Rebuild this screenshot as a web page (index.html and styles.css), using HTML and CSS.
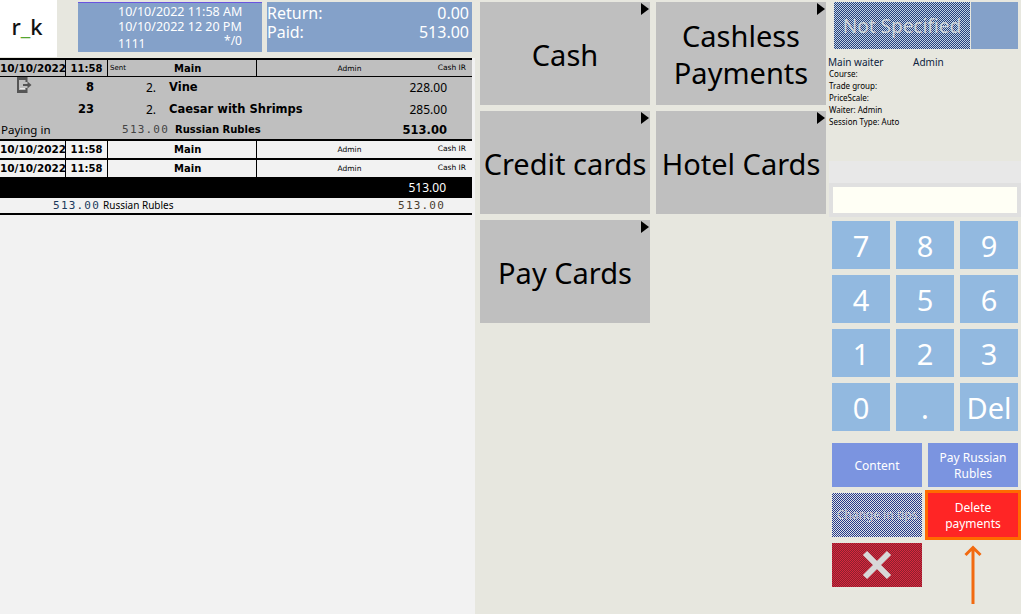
FILE: index.html
```html
<!DOCTYPE html>
<html lang="en">
<head>
    <meta charset="UTF-8">
    <title>Payment</title>
    <link rel="stylesheet" href="styles.css">
</head>
<body>
<div class="app">

    <div class="left">
        <div class="top">
            <div class="logo">r<span class="logo-line">_</span>k</div>
            <div class="order-info">
                <p>10/10/2022 11:58 AM</p>
                <p>10/10/2022 12 20 PM</p>
                <p class="order-last"><span>1111</span><span>*/0</span></p>
            </div>
            <div class="totals">
                <p><span>Return:</span><span>0.00</span></p>
                <p><span>Paid:</span><span>513.00</span></p>
            </div>
        </div>

        <div class="check">
            <div class="head-row active">
                <div class="c-date">10/10/2022</div>
                <div class="c-time">11:58</div>
                <div class="c-main"><span class="sent">Sent</span><b>Main</b></div>
                <div class="c-admin">Admin</div>
                <div class="c-pay">Cash IR</div>
            </div>
            <div class="items">
                <div class="item">
                    <div class="item-icon">
                        <svg width="15" height="16" viewBox="0 0 15 16">
                            <path d="M1 3v10" stroke="#555" stroke-width="2"/>
                            <path d="M0 0h10.500v5h-2V3H0zM0 13h8.500v-2h2v5H0z" fill="#555"/>
                            <path d="M3 11.500h5" stroke="#e8e8e8" stroke-width="1"/>
                            <path d="M6 8h5" stroke="#555" stroke-width="2"/>
                            <path d="M10.500 4.500L14.500 8l-4 3.500z" fill="#555"/>
                        </svg>
                    </div>
                    <div class="item-num">8</div>
                    <div class="item-qty">2.</div>
                    <div class="item-name">Vine</div>
                    <div class="item-sum">228.00</div>
                </div>
                <div class="item item-low">
                    <div class="item-icon"></div>
                    <div class="item-num">23</div>
                    <div class="item-qty">2.</div>
                    <div class="item-name">Caesar with Shrimps</div>
                    <div class="item-sum">285.00</div>
                </div>
                <div class="paying">
                    <div class="paying-label">Paying in</div>
                    <div class="paying-val">513.00</div>
                    <div class="paying-cur">Russian Rubles</div>
                    <div class="paying-sum">513.00</div>
                </div>
            </div>
            <div class="head-row">
                <div class="c-date">10/10/2022</div>
                <div class="c-time">11:58</div>
                <div class="c-main"><b>Main</b></div>
                <div class="c-admin">Admin</div>
                <div class="c-pay">Cash IR</div>
            </div>
            <div class="head-row">
                <div class="c-date">10/10/2022</div>
                <div class="c-time">11:58</div>
                <div class="c-main"><b>Main</b></div>
                <div class="c-admin">Admin</div>
                <div class="c-pay">Cash IR</div>
            </div>
            <div class="total-row">513.00</div>
            <div class="cur-row">
                <div class="cur-val">513.00</div>
                <div class="cur-name">Russian Rubles</div>
                <div class="cur-sum">513.00</div>
            </div>
        </div>
    </div>

    <div class="center">
        <div class="tile">Cash</div>
        <div class="tile">Cashless Payments</div>
        <div class="tile">Credit cards</div>
        <div class="tile">Hotel Cards</div>
        <div class="tile">Pay Cards</div>
    </div>

    <div class="right">
        <div class="table-btns">
            <div class="not-spec">Not Specified</div>
            <div class="table-blank"></div>
        </div>
        <div class="waiter-info">
            <div class="main-waiter"><span>Main waiter</span><span>Admin</span></div>
            <p>Course:</p>
            <p>Trade group:</p>
            <p>PriceScale:</p>
            <p>Waiter: Admin</p>
            <p>Session Type: Auto</p>
        </div>
        <div class="input-band">
            <div class="input-frame">
                <div class="input-box"></div>
            </div>
        </div>
        <div class="keypad">
            <div class="key">7</div>
            <div class="key">8</div>
            <div class="key">9</div>
            <div class="key">4</div>
            <div class="key">5</div>
            <div class="key">6</div>
            <div class="key">1</div>
            <div class="key">2</div>
            <div class="key">3</div>
            <div class="key">0</div>
            <div class="key">.</div>
            <div class="key">Del</div>
        </div>
        <div class="actions">
            <div class="act">Content</div>
            <div class="act">Pay Russian Rubles</div>
            <div class="act act-off">Change in tips</div>
            <div class="act act-del">Delete payments</div>
            <div class="act act-x">
                <svg width="30" height="30" viewBox="0 0 30 30">
                    <path d="M3 3l24 24M27 3L3 27" stroke="#d8d8d8" stroke-width="6"/>
                </svg>
            </div>
            <div class="arrow">
                <svg width="18" height="60" viewBox="0 0 18 60">
                    <path d="M9 59V2M1.500 10l7.500-7.500 7.500 7.500" fill="none" stroke="#f26a10" stroke-width="3"/>
                </svg>
            </div>
        </div>
    </div>

</div>
</body>
</html>
```

FILE: styles.css
```css
html, body{
    margin: 0;
    height: 100%;
}
body{
    font-family: "Noto Sans", "Liberation Sans", sans-serif;
    background-color: #e7e7df;
    overflow: hidden;
}
p{
    margin: 0;
}
.app{
    display: flex;
    width: 1021px;
    height: 614px;
}

/* left part */
.left{
    width: 475px;
    flex-shrink: 0;
    display: flex;
    flex-direction: column;
    background-color: #f2f2f2;
}
.top{
    display: flex;
    height: 58px;
    background-color: #e7e7df;
    flex-shrink: 0;
    padding-right: 3px;
}
.logo{
    width: 57px;
    height: 57px;
    flex-shrink: 0;
    background-color: white;
    display: flex;
    align-items: center;
    justify-content: center;
    font-size: 22px;
    font-weight: 500;
    color: #111;
    padding: 0 3px 6px 0;
    box-sizing: border-box;
}
.logo-line{
    color: #55a630;
}
.order-info{
    margin: 2px 0 6px 21px;
    width: 184px;
    flex-shrink: 0;
    box-sizing: border-box;
    padding: 1px 18px 0 40px;
    background-color: #84a1c9;
    border-top: 1px solid #6a55e0;
    color: white;
    font-size: 12.500px;
    line-height: 15px;
}
.order-last{
    display: flex;
    justify-content: space-between;
    padding: 2px 2px 0 0;
    font-size: 12px;
}
.order-last span:last-child{
    margin-top: -3px;
}
.totals{
    margin: 2px 0 6px 5px;
    flex: 1;
    box-sizing: border-box;
    padding: 2px 3px 0 0;
    background-color: #84a1c9;
    color: white;
    font-size: 16px;
    line-height: 19px;
}
.totals p{
    display: flex;
    justify-content: space-between;
}

/* check */
.check{
    width: 472px;
    font-family: "DejaVu Sans", sans-serif;
    color: black;
}
.head-row{
    display: flex;
    height: 17px;
    border-top: 2px solid black;
    background-color: #f2f2f2;
    font-size: 10px;
    line-height: 17px;
}
.head-row.active{
    height: 16px;
    background-color: #bfbfbf;
    border-bottom: 1px solid black;
}
.head-row > div{
    overflow: hidden;
    white-space: nowrap;
}
.c-date{
    width: 66px;
    box-sizing: border-box;
    border-right: 1px solid black;
    font-weight: bold;
    font-size: 10.500px;
}
.c-time{
    width: 42px;
    box-sizing: border-box;
    border-right: 1px solid black;
    text-align: center;
    font-weight: bold;
}
.c-main{
    width: 149px;
    box-sizing: border-box;
    border-right: 1px solid black;
    position: relative;
    padding-left: 66px;
}
.sent{
    position: absolute;
    left: 2px;
    font-size: 7px;
}
.c-admin{
    width: 165px;
    padding-left: 10px;
    text-align: center;
    font-size: 7.500px;
}
.c-pay{
    flex: 1;
    text-align: right;
    padding-right: 6px;
    font-size: 7.500px;
    line-height: 15px;
}
.items{
    background-color: #bfbfbf;
}
.item{
    display: flex;
    height: 21px;
    line-height: 21px;
    font-size: 11.500px;
}
.item-low{
    line-height: 23px;
}
.item-icon{
    width: 60px;
    flex-shrink: 0;
    box-sizing: border-box;
    padding-left: 17px;
}
.item-icon svg{
    display: block;
}
.item-num{
    flex: 0 0 34px;
    text-align: right;
    font-weight: bold;
}
.item-qty{
    width: 62px;
    text-align: right;
    font-family: "Noto Sans", sans-serif;
    font-size: 12px;
}
.item-name{
    flex: 1;
    padding-left: 13px;
    font-weight: bold;
}
.item-sum{
    width: 60px;
    text-align: right;
    padding-right: 25px;
    font-family: "Noto Sans", sans-serif;
    font-size: 12px;
}
.paying{
    display: flex;
    height: 20px;
    line-height: 22px;
    font-size: 11.500px;
}
.paying-label{
    width: 100px;
    padding-left: 1px;
    font-family: "Noto Sans", sans-serif;
    font-size: 11.500px;
}
.paying-val{
    width: 68px;
    text-align: right;
    font-family: "DejaVu Sans Mono", monospace;
    font-size: 11px;
    letter-spacing: 1.200px;
    color: #444;
}
.paying-cur{
    flex: 1;
    padding-left: 6px;
    font-weight: bold;
    font-size: 10px;
}
.paying-sum{
    width: 60px;
    text-align: right;
    padding-right: 25px;
    font-weight: bold;
}
.total-row{
    height: 21px;
    line-height: 21px;
    padding-right: 26px;
    text-align: right;
    background-color: black;
    color: white;
    font-family: "Noto Sans", sans-serif;
    font-size: 12px;
}
.cur-row{
    display: flex;
    height: 15px;
    line-height: 15px;
    border-bottom: 2px solid black;
    font-size: 10px;
}
.cur-val{
    width: 100px;
    text-align: right;
    font-family: "DejaVu Sans Mono", monospace;
    font-size: 11px;
    letter-spacing: 1.200px;
    color: #1c3a5c;
}
.cur-name{
    flex: 1;
    padding-left: 3px;
    font-family: "Noto Sans", sans-serif;
}
.cur-sum{
    width: 60px;
    text-align: right;
    padding-right: 27px;
    font-family: "DejaVu Sans Mono", monospace;
    font-size: 11px;
    letter-spacing: 1.200px;
    color: #4a4030;
}

/* payment types */
.center{
    width: 346px;
    flex-shrink: 0;
    margin-left: 5px;
    padding-top: 2px;
    display: grid;
    grid-template-columns: 170px 170px;
    grid-auto-rows: 103px;
    align-content: start;
    gap: 6px;
}
.tile{
    position: relative;
    background-color: #bfbfbf;
    display: flex;
    align-items: center;
    justify-content: center;
    text-align: center;
    font-size: 29px;
    line-height: 37px;
    color: black;
    padding-top: 1px;
    box-sizing: border-box;
}
.tile::after{
    content: "";
    position: absolute;
    top: 1px;
    right: 1px;
    border-left: 8px solid black;
    border-top: 6px solid transparent;
    border-bottom: 6px solid transparent;
}

/* right part */
.right{
    flex: 1;
    display: flex;
    flex-direction: column;
    padding-top: 2px;
}
.table-btns{
    display: flex;
    height: 47px;
    margin-left: 8px;
    gap: 1px;
}
.not-spec{
    width: 136px;
    display: flex;
    align-items: center;
    justify-content: center;
    background: repeating-conic-gradient(#24407a 0 25%, #c0d0e4 0 50%) 0 0/2px 2px;
    color: #ccd3d8;
    font-size: 19px;
}
.table-blank{
    width: 47px;
    background-color: #84a1c9;
}
.waiter-info{
    height: 112px;
    box-sizing: border-box;
    padding: 7px 0 0 3px;
    font-size: 8px;
    line-height: 12px;
    color: black;
}
.main-waiter{
    display: flex;
    margin-left: -1px;
    font-size: 10px;
    line-height: 12px;
    color: #0c2340;
}
.main-waiter span:first-child{
    width: 85px;
}
.input-band{
    height: 56px;
    box-sizing: border-box;
    padding-top: 22px;
    background-color: #e8e8e8;
    margin-left: 3px;
}
.input-frame{
    height: 34px;
    box-sizing: border-box;
    padding: 4px;
    background-color: #e0e0e0;
}
.input-box{
    height: 26px;
    background-color: #fffff5;
}
.keypad{
    display: grid;
    grid-template-columns: repeat(3, 58px);
    grid-auto-rows: 48px;
    gap: 6px;
    margin: 4px 0 0 6px;
}
.key{
    display: flex;
    align-items: center;
    justify-content: center;
    background-color: #92b9e0;
    color: white;
    font-size: 29px;
}
.actions{
    display: grid;
    grid-template-columns: repeat(2, 90px);
    grid-auto-rows: 44px;
    gap: 6px;
    margin: 12px 0 0 6px;
}
.act{
    display: flex;
    align-items: center;
    justify-content: center;
    text-align: center;
    background-color: #7b94e0;
    color: white;
    font-size: 12px;
    line-height: 16px;
    padding: 2px 8px 0;
    box-sizing: border-box;
}
.act-off{
    background: repeating-conic-gradient(#24388a 0 25%, #dfe3e6 0 50%) 0 0/2px 2px;
    color: #c8ccd4;
    padding: 0;
}
.act-del{
    background-color: #ff2525;
    outline: 3px solid #ff6a00;
}
.act-x{
    background: repeating-conic-gradient(#d8283c 0 25%, #8a2030 0 50%) 0 0/2px 2px;
    padding: 0;
}
.arrow{
    display: flex;
    justify-content: center;
}
.arrow svg{
    flex-shrink: 0;
    margin-top: 2px;
}
```
